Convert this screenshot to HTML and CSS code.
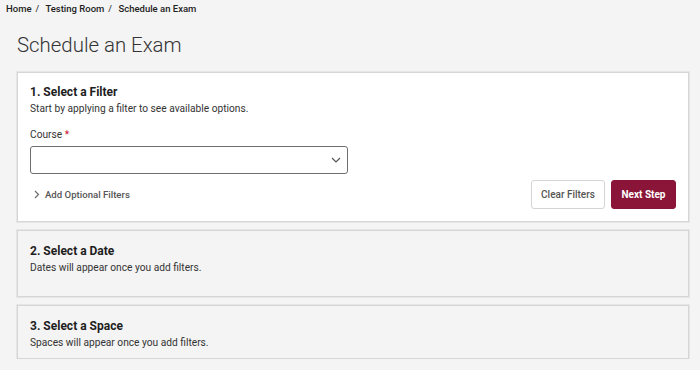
FILE: index.html
```html
<!DOCTYPE html>
<html>
<head>
  <meta charset="utf-8">
  <title>Schedule an Exam</title>
  <link rel="stylesheet" href="styles.css">
</head>
<body>
  <nav class="crumbs">
    <a href="#">Home</a><span class="sep">/</span>
    <a href="#">Testing Room</a><span class="sep">/</span>
    <span>Schedule an Exam</span>
  </nav>
  <h1 class="title">Schedule an Exam</h1>
  <main class="steps">
    <section class="step active">
      <h2>1. Select a Filter</h2>
      <p>Start by applying a filter to see available options.</p>
      <label class="label" for="course">Course <span class="req">*</span></label>
      <div class="select">
        <select id="course"><option></option></select>
        <svg class="caret" width="10" height="6" viewBox="0 0 10 6"><path d="M1 1l4 4 4-4" fill="none" stroke="#555" stroke-width="1.2"/></svg>
      </div>
      <div class="actions">
        <button class="toggle">
          <svg width="6" height="9" viewBox="0 0 6 9"><path d="M1 1l3.5 3.5L1 8" fill="none" stroke="#666" stroke-width="1.1"/></svg>
          Add Optional Filters
        </button>
        <div class="buttons">
          <button class="btn clear">Clear Filters</button>
          <button class="btn next">Next Step</button>
        </div>
      </div>
    </section>
    <section class="step date">
      <h2>2. Select a Date</h2>
      <p>Dates will appear once you add filters.</p>
    </section>
    <section class="step">
      <h2>3. Select a Space</h2>
      <p>Spaces will appear once you add filters.</p>
    </section>
  </main>
</body>
</html>
```

FILE: styles.css
```css
* {
  box-sizing: border-box;
  margin: 0; padding: 0; }
body {
  background: #f4f4f4;
  color: #222;
  font-family: Roboto, "Liberation Sans", sans-serif; }

/* breadcrumbs */
.crumbs {
  padding: 2px 6px 0;
  font-size: 9.5px;
  font-weight: 500;
  line-height: 14px;
  color: #222; }
.crumbs a {
  color: #222;
  text-decoration: none; }
.crumbs .sep {
  margin: 0 4px;
  color: #444; }

.title {
  margin: 16px 17px 0;
  font-size: 20.4px;
  font-weight: 300;
  line-height: 26px;
  color: #333; }

/* step cards */
.steps {
  display: flex;
  flex-direction: column;
  gap: 8px;
  margin: 14px 11px 0 17px; }
.step {
  border: 1px solid #d6d6d6;
  box-shadow: 0 0 0 1px #e6e6e6;
  padding: 13px 12px 8px;
  background: #f4f4f4; }
.step.active {
  background: #fff;
  padding-top: 12px;
  padding-bottom: 12px; }
.step.date {
  min-height: 67px; }
.step h2 {
  font-size: 12px;
  font-weight: 700;
  line-height: 15px;
  color: #1e1e1e; }
.step p {
  margin-top: 2px;
  font-size: 10.2px;
  line-height: 14px;
  color: #333; }

.label {
  display: block;
  margin-top: 12px;
  font-size: 10.2px;
  line-height: 14px;
  color: #333; }
.req { color: #c8102e; }

.select {
  position: relative;
  margin-top: 4px;
  width: 318px; }
.select select {
  display: block;
  width: 100%;
  height: 28px;
  border: 1px solid #6e6e6e;
  border-radius: 3px;
  background: #fff;
  appearance: none; }
.caret {
  position: absolute;
  right: 7px; top: 11px; }

.actions {
  display: flex;
  justify-content: space-between;
  align-items: center;
  margin-top: 6px; }
.toggle {
  display: flex;
  align-items: center;
  gap: 5px;
  padding-left: 4px;
  border: none;
  background: none;
  font: 500 9.6px Roboto, "Liberation Sans", sans-serif;
  color: #555; }
.buttons {
  display: flex;
  gap: 6px; }
.btn {
  height: 29px;
  padding: 0;
  border-radius: 3px;
  white-space: nowrap;
  font: 500 10px Roboto, "Liberation Sans", sans-serif; }
.btn.clear {
  width: 74px;
  border: 1px solid #d4d4d4;
  background: #fff;
  color: #555; }
.btn.next {
  width: 65px;
  border: 1px solid #8a1538;
  background: #8a1538;
  color: #fff;
  font-weight: 700; }
```
